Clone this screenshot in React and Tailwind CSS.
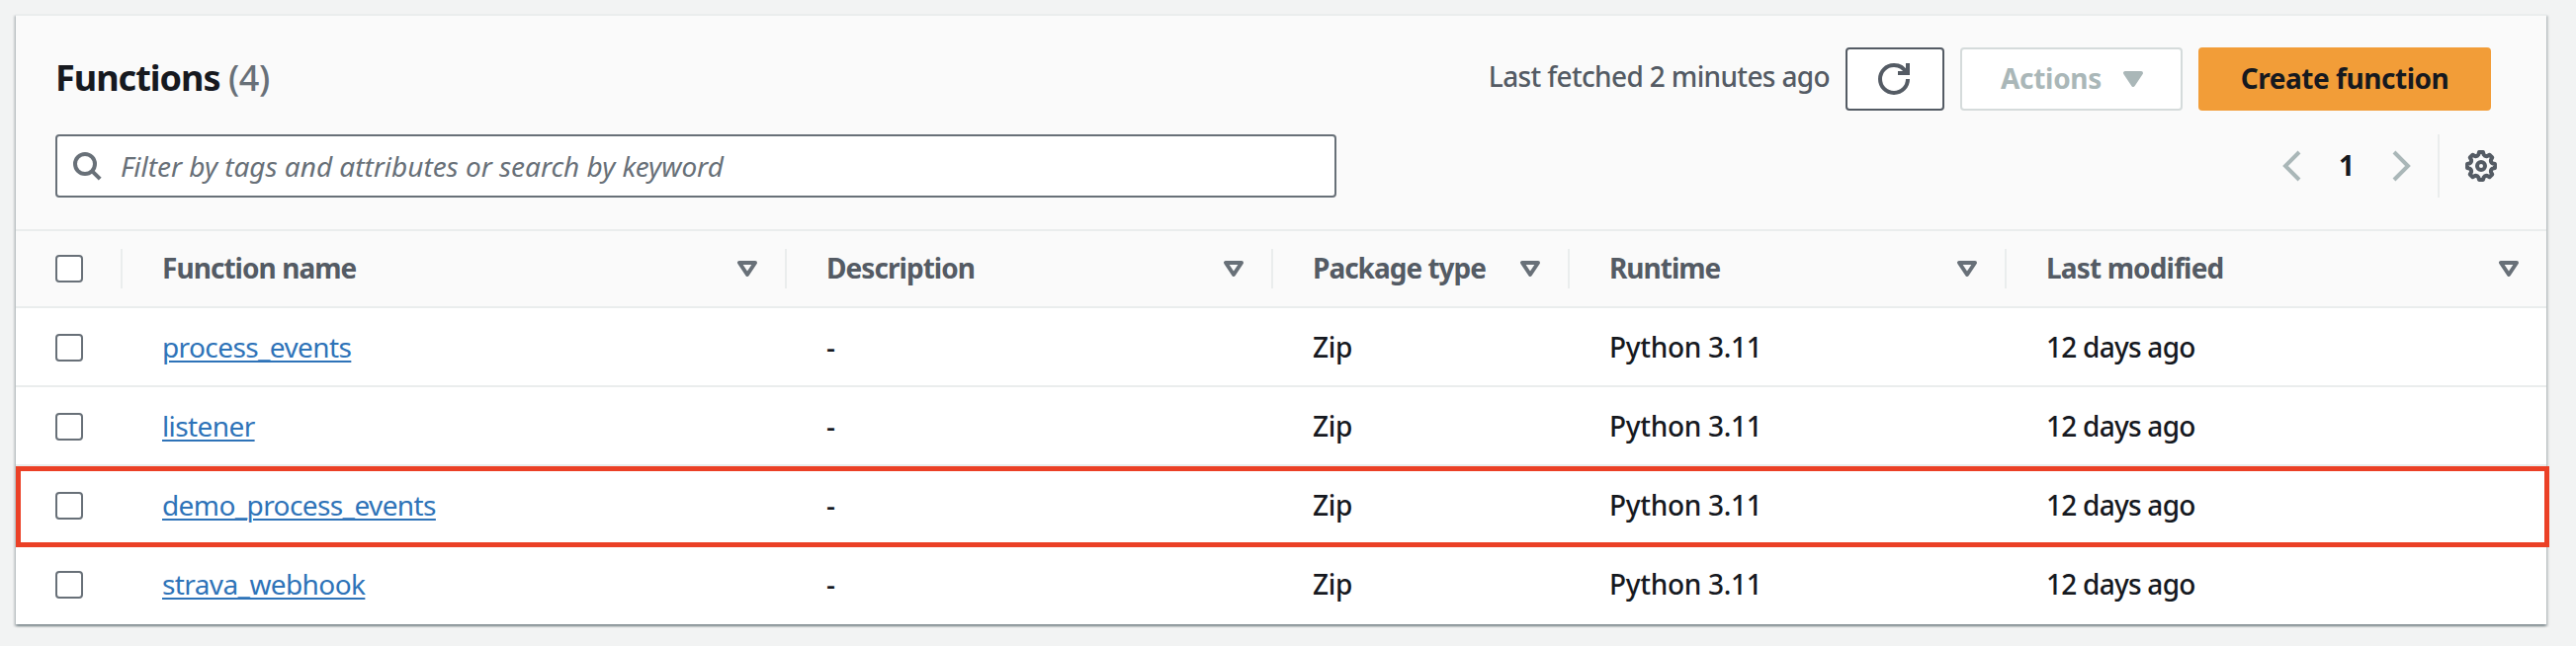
import React from "react";

const GRID = "grid grid-cols-[108px_672px_492px_300px_442px_546px]";

const COLUMNS = [
  { label: "Function name", cls: "tracking-[-0.95px]" },
  { label: "Description", cls: "tracking-[-0.95px]" },
  { label: "Package type", cls: "tracking-[-1px]" },
  { label: "Runtime", cls: "tracking-[-1px]" },
  { label: "Last modified", cls: "tracking-[-0.85px]" },
];

const ROWS = [
  { name: "process_events" },
  { name: "listener" },
  { name: "demo_process_events", highlighted: true },
  { name: "strava_webhook" },
];

function Icon({ className = "", children }) {
  return (
    <svg
      viewBox="0 0 16 16"
      className={`h-8 w-8 shrink-0 overflow-visible ${className}`}
      fill="none"
      stroke="currentColor"
      strokeWidth="2"
    >
      {children}
    </svg>
  );
}

function Caret({ filled, className }) {
  return (
    <Icon className={className}>
      <path d="M4 5h8l-4 6z" strokeLinejoin="round" fill={filled ? "currentColor" : "none"} />
    </Icon>
  );
}

function gearPath() {
  const point = (radius, degrees) => {
    const a = (degrees * Math.PI) / 180;
    return `${(8 + radius * Math.sin(a)).toFixed(2)} ${(8 - radius * Math.cos(a)).toFixed(2)}`;
  };
  let d = `M${point(7.05, -8)}`;
  for (let tooth = 0; tooth < 360; tooth += 45) {
    d += `L${point(7.05, tooth + 8)}L${point(5.9, tooth + 13)}`;
    d += `Q${point(5.1, tooth + 22.5)} ${point(5.9, tooth + 32)}L${point(7.05, tooth + 37)}`;
  }
  return d + "Z";
}

function Checkbox() {
  return (
    <input
      type="checkbox"
      className="block h-7 w-7 appearance-none rounded-[4px] border-2 border-[#687078] bg-white"
    />
  );
}

function Toolbar() {
  return (
    <div className="flex h-[120px] items-start justify-between pt-8 pr-14 pl-10">
      <h2 className="pt-[6px] text-[36px] leading-[50px] font-bold tracking-[-1px] text-[#16191f]">
        Functions <span className="font-medium tracking-[-0.4px] text-[#687078]">(4)</span>
      </h2>
      <div className="flex items-start">
        <span className="mr-[16px] pt-[9px] text-[28px] leading-[40px] font-medium tracking-[-0.65px] whitespace-nowrap text-[#545b64]">
          Last fetched 2 minutes ago
        </span>
        <button className="mr-4 flex h-16 w-[100px] items-center justify-center rounded-[4px] border-2 border-[#545b64] bg-white pr-0.5 text-[#545b64]">
          <Icon>
            <path d="M10 5h5V0M15 8a6.957 6.957 0 0 1-7 7 6.957 6.957 0 0 1-7-7 6.957 6.957 0 0 1 7-7 6.87 6.87 0 0 1 6.3 4" />
          </Icon>
        </button>
        <button className="mr-4 flex h-16 w-[225px] items-center justify-between rounded-[4px] border-2 border-[#d5dbdb] bg-white pr-8 pl-[39px] text-[#aab7b8]">
          <span className="-mt-0.5 text-[28px] leading-[40px] font-bold tracking-[-0.3px]">Actions</span>
          <Caret filled />
        </button>
        <button className="flex h-16 w-[296px] items-center justify-center rounded-[4px] bg-[#f29d38] pb-0.5 text-[28px] leading-[40px] font-bold tracking-[-0.45px] whitespace-nowrap text-[#16191f]">
          Create function
        </button>
      </div>
    </div>
  );
}

function FilterBar() {
  return (
    <div className="flex h-24 items-start justify-between pr-[50px] pl-10">
      <label className="flex h-16 w-[1296px] items-center rounded-[4px] border-2 border-[#687078] bg-white pl-3.5 text-[#687078]">
        <Icon>
          <circle cx="7" cy="7" r="5" />
          <path d="M10.4 10.4l4.2 4.2" />
        </Icon>
        <span className="ml-[18px] text-[28px] leading-[40px] font-[450] tracking-[-0.03px] italic">
          Filter by tags and attributes or search by keyword
        </span>
      </label>
      <div className="flex h-16 items-center text-[#aab7b8]">
        <Icon>
          <path d="M11 1L4 8l7 7" />
        </Icon>
        <span className="w-[76px] pb-0.5 text-center text-[28px] leading-[40px] font-bold text-[#16191f]">1</span>
        <Icon>
          <path d="M5 1l7 7-7 7" />
        </Icon>
        <span className="ml-[22px] h-16 w-0.5 bg-[#eaeded]" />
        <Icon className="ml-[26px] text-[#545b64]">
          <path d={gearPath()} strokeLinejoin="round" />
          <circle cx="8" cy="8" r="2" />
        </Icon>
      </div>
    </div>
  );
}

function HeaderRow() {
  return (
    <div className={`${GRID} h-20 items-center border-y-2 border-[#eaeded] bg-[#fafafa]`}>
      <div className="flex h-10 items-center border-r-2 border-[#eaeded] pl-10">
        <Checkbox />
      </div>
      {COLUMNS.map((column, i) => (
        <div
          key={column.label}
          className={`flex h-10 items-center justify-between border-[#eaeded] pr-[22px] pl-10 ${
            i < COLUMNS.length - 1 ? "border-r-2" : ""
          }`}
        >
          <span
            className={`-mt-0.5 text-[28px] leading-[40px] font-bold whitespace-nowrap text-[#545b64] ${column.cls}`}
          >
            {column.label}
          </span>
          <Caret className="text-[#687078]" />
        </div>
      ))}
    </div>
  );
}

function Row({ name, highlighted, last }) {
  return (
    <div
      className={`${GRID} relative h-20 items-center border-b-2 text-[28px] leading-[40px] font-medium text-[#16191f] ${
        last ? "border-white" : "border-[#eaeded]"
      }`}
    >
      <div className="pt-0.5 pl-10">
        <Checkbox />
      </div>
      <div className="pl-10">
        <a className="font-[450] tracking-[-0.6px] text-[#2e73b8] underline decoration-2 underline-offset-[3px]">
          {name}
        </a>
      </div>
      <div className="pl-10">-</div>
      <div className="pl-10 tracking-[-0.3px]">Zip</div>
      <div className="pl-10 tracking-[-0.3px]">Python 3.11</div>
      <div className="pl-10 tracking-[-0.75px]">12 days ago</div>
      {highlighted && (
        <div className="pointer-events-none absolute top-0 -right-[3px] left-0 z-10 h-[82px] border-[5px] border-[#eb4026]" />
      )}
    </div>
  );
}

export default function App() {
  return (
    <main className="h-[654px] w-[2606px] bg-[#f2f3f3] pt-3.5 pl-4 font-['Noto_Sans',sans-serif]">
      <section className="h-[618px] w-[2560px] bg-white shadow-[0_2px_2px_0_rgba(0,28,36,0.3),2px_2px_2px_0_rgba(0,28,36,0.15),-2px_2px_2px_0_rgba(0,28,36,0.15)]">
        <header className="h-[218px] border-t-2 border-[#eaeded] bg-[#fafafa]">
          <Toolbar />
          <FilterBar />
        </header>
        <HeaderRow />
        {ROWS.map((row, i) => (
          <Row key={row.name} {...row} last={i === ROWS.length - 1} />
        ))}
      </section>
    </main>
  );
}
